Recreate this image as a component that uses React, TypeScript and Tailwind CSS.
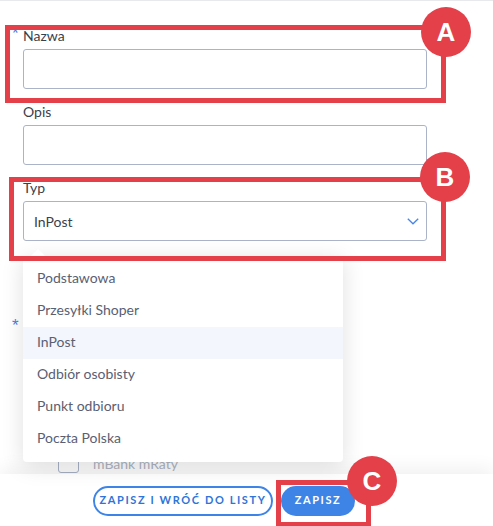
const font = "font-['Lato','Noto_Sans',sans-serif]";

const options = ["Podstawowa", "Przesyłki Shoper", "InPost", "Odbiór osobisty", "Punkt odbioru", "Poczta Polska"];

const Marker = ({ letter, className }: { letter: string; className: string }) => (
  <div
    className={`absolute w-[50px] h-[50px] rounded-full bg-[#e3404a] flex items-center justify-center text-white text-[26px] font-bold font-['Liberation_Sans',Arial,sans-serif] ${className}`}
  >
    {letter}
  </div>
);

const Star = () => (
  <span className="absolute -left-[11px] top-0 leading-[16px] text-[#4a80e2] text-[17px] font-['Liberation_Sans',Arial,sans-serif]">
    *
  </span>
);

export default function App() {
  return (
    <div className={`relative w-[493px] h-[526px] overflow-hidden bg-white border-t border-[#e8e9ec] flex flex-col ${font}`}>
      <main className="flex-1 overflow-hidden pl-[23px] pt-[25px]">
        <div className="w-[404px] flex flex-col">
          <label className="relative h-[20px] mb-[3px] text-[14px] leading-[20px] text-[#3a3f4c]">
            <Star />
            Nazwa
          </label>
          <input className="h-[40px] rounded-[3px] border border-[#aab3c8] outline-none" />

          <label className="h-[20px] mt-[13px] mb-[3px] text-[14px] leading-[20px] text-[#3a3f4c]">Opis</label>
          <input className="h-[40px] rounded-[3px] border border-[#aab3c8] outline-none" />

          <label className="h-[20px] mt-[13px] mb-[3px] text-[14px] leading-[20px] text-[#3a3f4c]">Typ</label>
          <div className="h-[40px] rounded-[3px] border border-[#aab3c8] flex items-center justify-between pl-[10px] pr-[7px] text-[14px] text-[#3a3f4c]">
            <span>InPost</span>
            <svg width="12" height="7" viewBox="0 0 12 7" fill="none">
              <path d="M0.8 0.8L6 5.8L11.2 0.8" stroke="#4a86e8" strokeWidth="1.3" />
            </svg>
          </div>

          {/* required field hidden under the open menu */}
          <div className="relative h-[20px] mt-[77px]">
            <Star />
          </div>
          <div className="flex flex-col gap-[12px] mt-[19px] pl-[35px]">
            <span className="w-[21px] h-[20px] rounded-[3px] border border-[#aab3c8]" />
            <span className="w-[21px] h-[20px] rounded-[3px] border border-[#aab3c8]" />
            <span className="w-[21px] h-[20px] rounded-[3px] border border-[#aab3c8]" />
            <div className="flex items-center gap-[14px] h-[20px]">
              <span className="w-[21px] h-[20px] rounded-[3px] border border-[#aab3c8] bg-white" />
              <span className="text-[14px] text-[#b0b5c2]">mBank mRaty</span>
            </div>
          </div>
        </div>
      </main>

      <footer className="relative z-10 h-[52px] bg-white shadow-[0_-6px_18px_rgba(0,0,0,0.06)] flex items-center gap-[8px] pl-[93px] pt-[1px]">
        <button className="h-[30px] w-[180px] rounded-full border-2 border-[#3d84e6] text-[#2f74d8] text-[11px] font-bold tracking-[1.6px]">
          ZAPISZ I WRÓĆ DO LISTY
        </button>
        <button className="h-[30px] w-[74px] rounded-full bg-[#3d84e6] text-white text-[11px] font-bold tracking-[1.6px]">
          ZAPISZ
        </button>
      </footer>

      {/* open select menu */}
      <div className="absolute z-20 left-[23px] top-[255px] w-[320px] rounded-[4px] bg-white shadow-[0_4px_22px_rgba(0,0,0,0.13)] py-[7px]">
        <div className="absolute -top-[5px] left-[10px] w-[10px] h-[10px] rotate-45 bg-white" />
        {options.map((o) => (
          <div
            key={o}
            className={`h-[32px] flex items-center pl-[14px] pb-[3px] text-[14px] text-[#5a6072] ${o === "InPost" ? "bg-[#f3f6fd]" : ""}`}
          >
            {o}
          </div>
        ))}
      </div>

      {/* annotations */}
      <div className="absolute z-30 left-[5px] top-[24px] w-[441px] h-[78px] border-[5px] border-[#e3404a]" />
      <div className="absolute z-30 left-[9px] top-[176px] w-[437px] h-[84px] border-[5px] border-[#e3404a]" />
      <div className="absolute z-30 left-[276px] top-[479px] w-[95px] h-[47px] border-[5px] border-[#e3404a]" />
      <Marker letter="A" className="z-40 left-[421px] top-[6px]" />
      <Marker letter="B" className="z-40 left-[420px] top-[151px]" />
      <Marker letter="C" className="z-40 left-[347px] top-[455px]" />
    </div>
  );
}
